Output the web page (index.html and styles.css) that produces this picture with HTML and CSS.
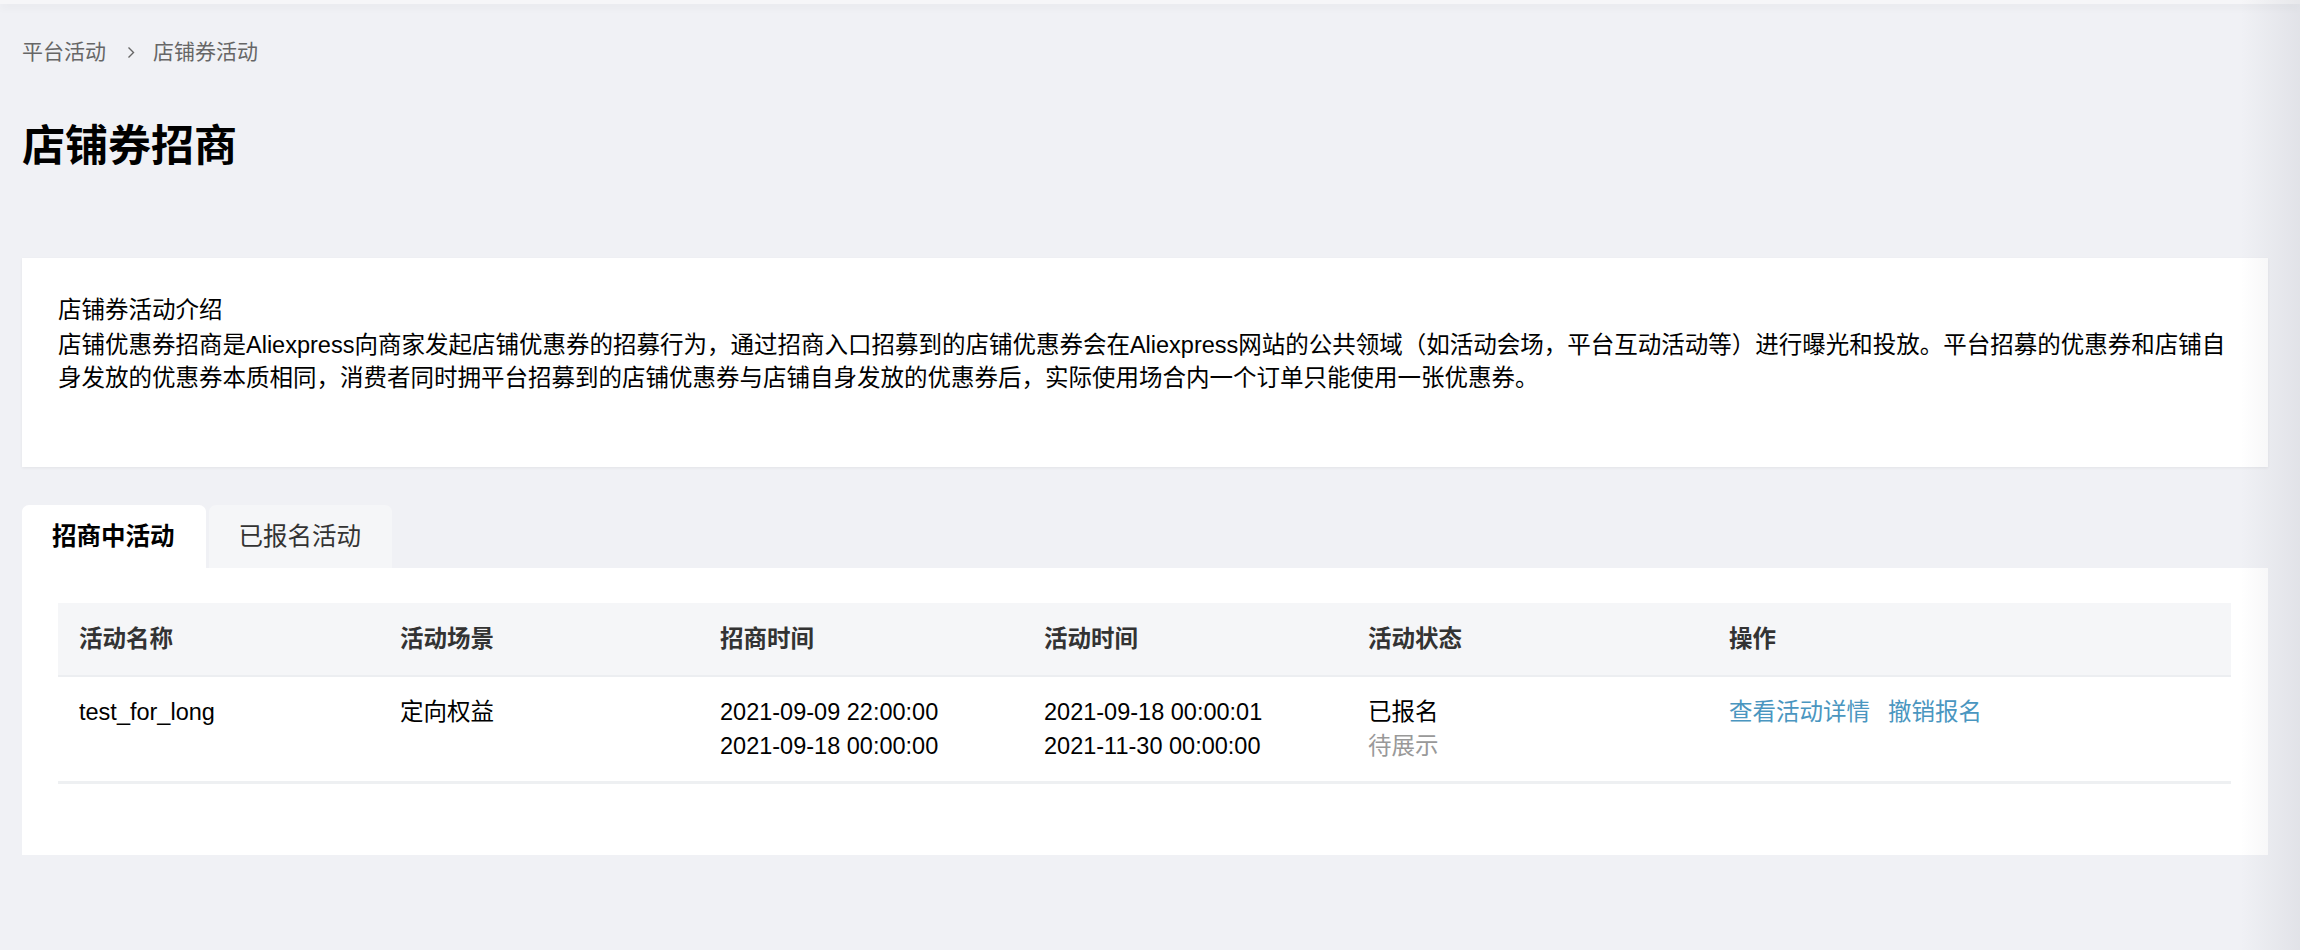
FILE: index.html
```html
<!DOCTYPE html>
<html lang="zh-CN">
<head>
    <meta charset="UTF-8">
    <meta name="viewport" content="width=device-width, initial-scale=1.0">
    <title>店铺券招商</title>
    <link rel="stylesheet" href="styles.css">
</head>
<body>
    <div class="top-bar"></div>

    <div class="page">
        <div class="breadcrumb">
            <span>平台活动</span>
            <svg class="crumb-sep" width="8" height="13" viewBox="0 0 8 13"><path d="M1.5 1.5 L6.5 6.5 L1.5 11.5" fill="none" stroke="#666" stroke-width="1.4"/></svg>
            <span>店铺券活动</span>
        </div>

        <h1 class="page-title">店铺券招商</h1>

        <div class="intro-card">
            <div class="intro-title">店铺券活动介绍</div>
            <p class="intro-text">店铺优惠券招商是Aliexpress向商家发起店铺优惠券的招募行为，通过招商入口招募到的店铺优惠券会在Aliexpress网站的公共领域（如活动会场，平台互动活动等）进行曝光和投放。平台招募的优惠券和店铺自身发放的优惠券本质相同，消费者同时拥平台招募到的店铺优惠券与店铺自身发放的优惠券后，实际使用场合内一个订单只能使用一张优惠券。</p>
        </div>

        <div class="tabs">
            <div class="tab active">招商中活动</div>
            <div class="tab">已报名活动</div>
        </div>

        <div class="tab-panel">
            <div class="table">
                <div class="table-row table-head">
                    <div class="cell">活动名称</div>
                    <div class="cell">活动场景</div>
                    <div class="cell">招商时间</div>
                    <div class="cell">活动时间</div>
                    <div class="cell">活动状态</div>
                    <div class="cell">操作</div>
                </div>
                <div class="table-row">
                    <div class="cell">test_for_long</div>
                    <div class="cell">定向权益</div>
                    <div class="cell">2021-09-09 22:00:00<br>2021-09-18 00:00:00</div>
                    <div class="cell">2021-09-18 00:00:01<br>2021-11-30 00:00:00</div>
                    <div class="cell">已报名<br><span class="status-sub">待展示</span></div>
                    <div class="cell actions">
                        <a href="#" class="link">查看活动详情</a>
                        <a href="#" class="link">撤销报名</a>
                    </div>
                </div>
            </div>
        </div>
    </div>

    <div class="side-shadow"></div>
</body>
</html>
```

FILE: styles.css
```css
body {
    margin: 0;
    background: #f0f1f5;
    font-family: "Liberation Sans", "Noto Sans CJK SC", sans-serif;
    color: #000;
    min-height: 950px;
}
.top-bar {
    height: 4px;
    background: #f6f6f8;
    box-shadow: 0 3px 8px rgba(0,0,0,0.06);
}
.page {
    padding: 33px 32px 0 22px;
}
.breadcrumb {
    display: flex;
    align-items: center;
    font-size: 21px;
    line-height: 30px;
    color: #666;
}
.crumb-sep {
    margin: 0 18px 0 21px;
}
.page-title {
    margin: 51px 0 0 0;
    font-size: 43px;
    line-height: 56px;
    font-weight: bold;
}
.intro-card {
    margin-top: 84px;
    background: white;
    padding: 35px 36px 72px;
    box-shadow: 0 1px 3px rgba(0,0,0,0.06);
    font-size: 23.5px;
}
.intro-title {
    line-height: 34px;
}
.intro-text {
    margin: 2px 0 0 0;
    line-height: 33px;
}
.tabs {
    display: flex;
    gap: 3px;
    margin-top: 38px;
}
.tab {
    height: 63px;
    line-height: 63px;
    padding: 0 31px 0 30px;
    font-size: 24.5px;
    color: #333;
    background: #f5f6f8;
    border-radius: 7px 7px 0 0;
}
.tab.active {
    background: white;
    color: #000;
    font-weight: bold;
}
.tab-panel {
    background: white;
    padding: 35px 37px 71px 36px;
}
.table-row {
    display: grid;
    grid-template-columns: 321px 320px 324px 324px 361px 1fr;
    border-bottom: 3px solid #eef0f2;
    font-size: 23.5px;
}
.table-head {
    background: #f5f6f8;
    border-bottom: 2px solid #eceef1;
    font-weight: bold;
    color: #333;
}
.table-head .cell {
    line-height: 72px;
    padding-top: 0;
    padding-bottom: 0;
}
.cell {
    padding: 18px 21px 18px;
    line-height: 34px;
}
.status-sub {
    color: #999;
}
.actions {
    display: flex;
    gap: 18px;
    align-items: flex-start;
}
.link {
    color: #4a96c0;
    text-decoration: none;
}
.side-shadow {
    position: absolute;
    top: 0;
    right: 0;
    width: 60px;
    height: 950px;
    background: linear-gradient(to right, rgba(30,35,60,0), rgba(30,35,60,0.07));
    pointer-events: none;
}
```
